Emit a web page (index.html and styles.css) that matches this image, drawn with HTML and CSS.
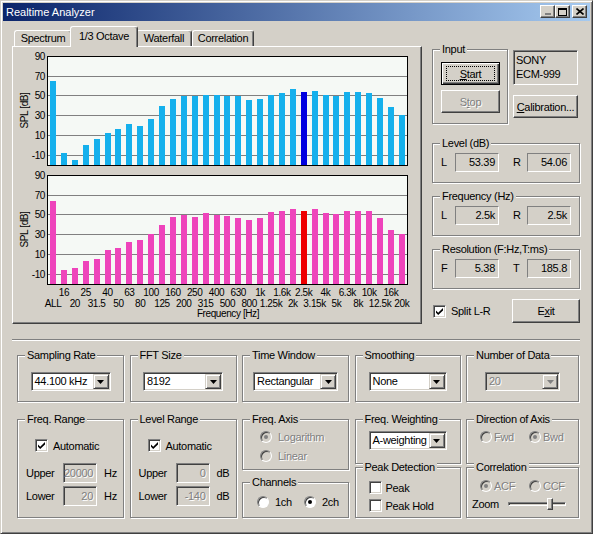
FILE: index.html
```html
<!DOCTYPE html>
<html lang="en">
<head>
  <meta charset="UTF-8">
  <title>Realtime Analyzer</title>
  <link rel="stylesheet" href="styles.css">
</head>
<body>
  <div class="window">
    <div class="titlebar">
      <span class="title">Realtime Analyzer</span>
      <div class="caption-buttons">
        <span class="cap-btn cap-min"><svg width="6" height="2"><rect width="6" height="2" fill="#808080"/></svg></span>
        <span class="cap-btn"><svg width="9" height="8" viewBox="0 0 9 8"><path d="M0 0h9v8H0z M1 2v5h7V2z" fill-rule="evenodd"/></svg></span>
        <span class="cap-btn cap-close"><svg width="8" height="7" viewBox="0 0 8 7"><path d="M0.5 0.5l7 6M7.5 0.5l-7 6" stroke="#000" stroke-width="1.6"/></svg></span>
      </div>
    </div>

    <div class="client">
      <div class="main">
        <div class="tabs">
          <div class="tab-strip">
            <div class="tab tab-spectrum">Spectrum</div>
            <div class="tab tab-octave active">1/3 Octave</div>
            <div class="tab tab-waterfall">Waterfall</div>
            <div class="tab tab-correlation">Correlation</div>
          </div>
          <div class="pane">
            <svg id="chart" class="chart" width="408" height="276" viewBox="13 47 408 276"></svg>
          </div>
        </div>

        <div class="side">
          <div class="input-row">
            <div class="group input-group">
              <span class="group-title">Input</span>
              <div class="btn btn-default btn-input"><u>S</u>tart</div>
              <div class="btn btn-input disabled">S<u>t</u>op</div>
            </div>
            <div class="device-col">
              <div class="device">SONY<br>ECM-999</div>
              <div class="btn btn-cal"><u>C</u>alibration...</div>
            </div>
          </div>

          <div class="group meter">
            <span class="group-title">Level (dB)</span>
            <span class="ch">L</span><span class="readout">53.39</span>
            <span class="ch ch-r">R</span><span class="readout">54.06</span>
          </div>

          <div class="group meter">
            <span class="group-title">Frequency (Hz)</span>
            <span class="ch">L</span><span class="readout">2.5k</span>
            <span class="ch ch-r">R</span><span class="readout">2.5k</span>
          </div>

          <div class="group meter">
            <span class="group-title">Resolution (F:Hz,T:ms)</span>
            <span class="ch">F</span><span class="readout">5.38</span>
            <span class="ch ch-r">T</span><span class="readout">185.8</span>
          </div>

          <div class="side-foot">
            <label class="check-item split">
              <span class="check"><svg width="9" height="9" viewBox="0 0 9 9"><path d="M1 3.5l2.2 2.2L8 1v2.4L3.2 8 1 5.8z"/></svg></span>
              Split L-R
            </label>
            <div class="btn btn-exit">E<u>x</u>it</div>
          </div>
        </div>
      </div>

      <div class="separator"></div>

      <div class="settings">
        <!-- row 1 -->
        <div class="group group-combo">
          <span class="group-title">Sampling Rate</span>
          <div class="combo combo-sampling">
            <span class="combo-text">44.100 kHz</span>
            <span class="combo-btn"><svg width="7" height="4" viewBox="0 0 7 4"><path d="M0 0h7L3.5 4z"/></svg></span>
          </div>
        </div>
        <div class="group group-combo">
          <span class="group-title">FFT Size</span>
          <div class="combo combo-fft">
            <span class="combo-text">8192</span>
            <span class="combo-btn"><svg width="7" height="4" viewBox="0 0 7 4"><path d="M0 0h7L3.5 4z"/></svg></span>
          </div>
        </div>
        <div class="group group-combo">
          <span class="group-title">Time Window</span>
          <div class="combo combo-window">
            <span class="combo-text">Rectangular</span>
            <span class="combo-btn"><svg width="7" height="4" viewBox="0 0 7 4"><path d="M0 0h7L3.5 4z"/></svg></span>
          </div>
        </div>
        <div class="group group-combo">
          <span class="group-title">Smoothing</span>
          <div class="combo combo-smoothing">
            <span class="combo-text">None</span>
            <span class="combo-btn"><svg width="7" height="4" viewBox="0 0 7 4"><path d="M0 0h7L3.5 4z"/></svg></span>
          </div>
        </div>
        <div class="group group-combo">
          <span class="group-title">Number of Data</span>
          <div class="combo combo-number disabled">
            <span class="combo-text">20</span>
            <span class="combo-btn"><svg width="7" height="4" viewBox="0 0 7 4"><path d="M0 0h7L3.5 4z" fill="#808080"/></svg></span>
          </div>
        </div>

        <!-- row 2 -->
        <div class="group range">
          <span class="group-title">Freq. Range</span>
          <label class="check-item auto">
            <span class="check"><svg width="9" height="9" viewBox="0 0 9 9"><path d="M1 3.5l2.2 2.2L8 1v2.4L3.2 8 1 5.8z"/></svg></span>
            Automatic
          </label>
          <div class="field field-first"><span class="field-label">Upper</span><span class="edit">20000</span><span class="unit">Hz</span></div>
          <div class="field"><span class="field-label">Lower</span><span class="edit">20</span><span class="unit">Hz</span></div>
        </div>

        <div class="group range">
          <span class="group-title">Level Range</span>
          <label class="check-item auto">
            <span class="check"><svg width="9" height="9" viewBox="0 0 9 9"><path d="M1 3.5l2.2 2.2L8 1v2.4L3.2 8 1 5.8z"/></svg></span>
            Automatic
          </label>
          <div class="field field-first"><span class="field-label">Upper</span><span class="edit">0</span><span class="unit">dB</span></div>
          <div class="field"><span class="field-label">Lower</span><span class="edit">-140</span><span class="unit">dB</span></div>
        </div>

        <div class="stack">
          <div class="group axis">
            <span class="group-title">Freq. Axis</span>
            <div class="radio-item disabled"><span class="radio on"></span>Logarithm</div>
            <div class="radio-item disabled"><span class="radio"></span>Linear</div>
          </div>
          <div class="group channels">
            <span class="group-title">Channels</span>
            <div class="radio-item ch-1"><span class="radio"></span>1ch</div>
            <div class="radio-item"><span class="radio on"></span>2ch</div>
          </div>
        </div>

        <div class="stack">
          <div class="group weighting">
            <span class="group-title">Freq. Weighting</span>
            <div class="combo combo-weighting">
              <span class="combo-text">A-weighting</span>
              <span class="combo-btn"><svg width="7" height="4" viewBox="0 0 7 4"><path d="M0 0h7L3.5 4z"/></svg></span>
            </div>
          </div>
          <div class="group peak">
            <span class="group-title">Peak Detection</span>
            <label class="check-item"><span class="check"></span>Peak</label>
            <label class="check-item"><span class="check"></span>Peak Hold</label>
          </div>
        </div>

        <div class="stack">
          <div class="group direction">
            <span class="group-title">Direction of Axis</span>
            <div class="radio-row">
              <div class="radio-item compact disabled opt-first"><span class="radio"></span>Fwd</div>
              <div class="radio-item compact disabled"><span class="radio on"></span>Bwd</div>
            </div>
          </div>
          <div class="group correlation">
            <span class="group-title">Correlation</span>
            <div class="radio-row">
              <div class="radio-item compact disabled opt-first"><span class="radio on"></span>ACF</div>
              <div class="radio-item compact disabled"><span class="radio"></span>CCF</div>
            </div>
            <div class="zoom-row">
              <span>Zoom</span>
              <div class="slider"><span class="slider-track"></span><span class="slider-thumb"></span></div>
            </div>
          </div>
        </div>
      </div>
    </div>
  </div>

  <script>
    const NS = "http://www.w3.org/2000/svg";
    const chart = document.getElementById("chart");
    const bands = ["ALL", "16", "20", "25", "31.5", "40", "50", "63", "80", "100", "125", "160",
      "200", "250", "315", "400", "500", "630", "800", "1k", "1.25k", "1.6k", "2k", "2.5k",
      "3.15k", "4k", "5k", "6.3k", "8k", "10k", "12.5k", "16k", "20k"];
    const upper = [66, -7.5, -15, 0.7, 6.5, 12.6, 16.7, 21.8, 20, 27.2, 40.4, 47.5, 50, 50, 51.3,
      51.3, 50, 50, 46.2, 47.5, 51.3, 53.3, 57.4, 54.4, 55.4, 51.3, 50, 54.4, 54.4, 53.3, 48.6, 39.4, 30.9];
    const lower = [65, -5.5, -3.5, 3.6, 5.3, 14.5, 16.5, 22.9, 24.6, 30.7, 40.2, 48, 50, 48, 52,
      50, 49, 47, 45, 47, 53, 54, 57, 54, 57, 52, 51, 54, 54, 54, 47, 35, 30.7];
    const peak = 23;

    function add(tag, attrs, text) {
      const node = document.createElementNS(NS, tag);
      for (const k in attrs) node.setAttribute(k, attrs[k]);
      if (text) node.textContent = text;
      chart.appendChild(node);
      return node;
    }

    // one plot: frame, grid, dB labels, bars
    function drawPlot(top, values, color, peakColor) {
      const bottom = top + 109;
      add("rect", { x: 47.5, y: top, width: 360, height: 109, fill: "#f5f9f5", stroke: "#000" });
      for (let k = 0; k <= 5; k++) {
        const y = Math.round(top + k * 19.7 - 0.5) + 0.5;
        if (k > 0) add("line", { x1: 48, x2: 407, y1: y, y2: y, stroke: "#808080" });
        add("text", { x: 45, y: y + 3.5, "text-anchor": "end" }, String(90 - k * 20));
      }
      values.forEach((v, i) => {
        const y = Math.round(top + 0.5 + (90 - v) * 0.985);
        add("rect", {
          x: Math.round(50 + i * 10.9), y: y, width: 6, height: bottom - 0.5 - y,
          fill: i === peak ? peakColor : color, "shape-rendering": "crispEdges"
        });
      });
      add("text", { transform: "translate(28 " + (top + 54) + ") rotate(-90)", "text-anchor": "middle" }, "SPL [dB]");
    }

    drawPlot(56.5, upper, "#14b0ec", "#0000e0");
    drawPlot(175.5, lower, "#ee44bb", "#ee0000");

    bands.forEach((b, i) => {
      add("text", { x: 53 + i * 10.9, y: i % 2 ? 295.5 : 306.5, "text-anchor": "middle" }, b);
    });
    add("text", { x: 228, y: 316.5, "text-anchor": "middle" }, "Frequency  [Hz]");
  </script>
</body>
</html>
```

FILE: styles.css
```css
* {
  box-sizing: border-box;
}

body {
  margin: 0;
  background-color: #d4d0c8;
  font-family: "Liberation Sans", Arial, sans-serif;
  font-size: 11px;
  letter-spacing: -0.3px;
  color: #000;
}

.window {
  width: 593px;
  height: 534px;
  padding: 2px;
  border: 1px solid;
  border-color: #d4d0c8 #404040 #404040 #d4d0c8;
  box-shadow: inset 1px 1px #fff, inset -1px -1px #808080;
  overflow: hidden;
}

/* title bar */
.titlebar {
  height: 18px;
  display: flex;
  align-items: center;
  padding: 0 3px;
  background: linear-gradient(to right, #0a246a, #a6caf0);
  color: #fff;
  letter-spacing: 0;
}

.caption-buttons {
  margin-left: auto;
  display: flex;
  align-self: flex-start;
  margin-top: 2px;
}

.cap-btn {
  width: 15px;
  height: 13px;
  display: flex;
  align-items: center;
  justify-content: center;
  background-color: #d4d0c8;
  border: 1px solid;
  border-color: #fff #404040 #404040 #fff;
  box-shadow: inset -1px -1px #808080;
}

.cap-min {
  align-items: flex-end;
  padding-bottom: 2px;
}

.cap-close {
  margin-left: 2px;
}

.client {
  padding: 5px 0 0 9px;
}

.main {
  display: flex;
  gap: 10px;
  height: 298px;
}

/* tab control */
.tabs {
  width: 410px;
}

.tab-strip {
  display: flex;
  align-items: flex-end;
  height: 20px;
  padding-left: 2px;
}

.tab {
  height: 16px;
  border: 1px solid;
  border-bottom: none;
  border-color: #fff #404040 #404040 #fff;
  border-radius: 3px 3px 0 0;
  box-shadow: inset -1px 0 #808080;
  text-align: center;
  line-height: 15px;
  white-space: nowrap;
}

.tab.active {
  height: 21px;
  margin: 0 -2px -1px;
  position: relative;
  z-index: 1;
  background-color: #d4d0c8;
  line-height: 18px;
}

.tab-spectrum { width: 58px; }
.tab-octave { width: 68px; }
.tab-waterfall { width: 56px; }
.tab-correlation { width: 62px; }

.pane {
  height: 278px;
  border: 1px solid;
  border-color: #fff #404040 #404040 #fff;
  box-shadow: inset -1px -1px #808080;
}

.chart {
  display: block;
}

.chart text {
  font-family: "Liberation Sans", Arial, sans-serif;
  font-size: 10px;
  letter-spacing: -0.4px;
  fill: #000;
}

/* group boxes */
.group {
  position: relative;
  border: 1px solid #808080;
  box-shadow: inset 1px 1px #fff, 1px 1px #fff;
}

.group-title {
  position: absolute;
  top: -7px;
  left: 7px;
  padding: 0 2px;
  line-height: 13px;
  background-color: #d4d0c8;
  white-space: nowrap;
}

/* buttons */
.btn {
  display: flex;
  align-items: center;
  justify-content: center;
  background-color: #d4d0c8;
  border: 1px solid;
  border-color: #fff #404040 #404040 #fff;
  box-shadow: inset -1px -1px #808080;
  white-space: nowrap;
}

.btn-default {
  position: relative;
  border-color: #000;
  box-shadow: inset 1px 1px #fff, inset -1px -1px #404040, inset -2px -2px #808080;
}

.btn-default::after {
  content: "";
  position: absolute;
  inset: 3px 4px;
  border: 1px dotted #000;
}

.disabled,
.btn.disabled {
  color: #808080;
  text-shadow: 1px 1px #fff;
}

/* right column */
.side {
  width: 148px;
  display: flex;
  flex-direction: column;
}

.input-row {
  display: flex;
  margin-top: 23px;
}

.input-group {
  width: 76px;
  height: 75px;
  padding: 12px 0 0 8px;
  display: flex;
  flex-direction: column;
  gap: 5px;
}

.btn-input {
  width: 59px;
  height: 23px;
}

.device-col {
  width: 65px;
  margin-left: 5px;
}

.device {
  height: 35px;
  margin-top: 1px;
  padding: 2px 0 0 2px;
  line-height: 14px;
  border: 1px solid;
  border-color: #808080 #fff #fff #808080;
  box-shadow: inset 1px 1px #404040;
}

.btn-cal {
  height: 23px;
  margin-top: 10px;
}

.meter {
  height: 40px;
  margin-top: 13px;
  padding: 9px 0 0 8px;
  display: flex;
  align-items: flex-start;
}

.input-row + .meter {
  margin-top: 19px;
}

.ch {
  width: 14px;
  line-height: 19px;
}

.ch-r {
  margin-left: 14px;
}

.readout {
  width: 44px;
  height: 19px;
  padding-right: 3px;
  border: 1px solid;
  border-color: #808080 #fff #fff #808080;
  text-align: right;
  line-height: 17px;
}

.side-foot {
  display: flex;
  align-items: center;
  height: 24px;
  margin-top: 10px;
}

.split {
  margin-left: 1px;
}

.btn-exit {
  width: 68px;
  height: 24px;
  margin-left: auto;
}

/* check boxes and radios */
.check-item {
  display: flex;
  align-items: center;
  gap: 5px;
  height: 13px;
  white-space: nowrap;
}

.check {
  width: 13px;
  height: 13px;
  display: flex;
  align-items: center;
  justify-content: center;
  background-color: #fff;
  border: 1px solid;
  border-color: #808080 #fff #fff #808080;
  box-shadow: inset 1px 1px #404040, inset -1px -1px #d4d0c8;
}

.radio-item {
  display: flex;
  align-items: center;
  gap: 6px;
  height: 12px;
  white-space: nowrap;
}

.radio-item.compact {
  gap: 2px;
}

.radio {
  width: 12px;
  height: 12px;
  display: flex;
  align-items: center;
  justify-content: center;
  border-radius: 50%;
  background-color: #fff;
  border: 1px solid;
  border-color: #808080 #fff #fff #808080;
  box-shadow: inset 1px 1px #404040;
  text-shadow: none;
}

.radio.on::after {
  content: "";
  width: 4px;
  height: 4px;
  border-radius: 50%;
  background-color: #000;
}

.disabled .radio {
  background-color: #d4d0c8;
}

.disabled .radio.on::after {
  background-color: #808080;
}

/* separator and settings */
.separator {
  width: 568px;
  height: 2px;
  margin-top: 15px;
  border-top: 1px solid #808080;
  border-bottom: 1px solid #fff;
}

.settings {
  display: grid;
  grid-template-columns: 107px 107px 107px 106px 113px;
  grid-template-rows: 47px 99px;
  column-gap: 5.5px;
  row-gap: 17px;
  margin: 14px 0 0 5px;
}

.group-combo {
  display: flex;
  justify-content: center;
  align-items: flex-start;
  padding-top: 16px;
}

.combo {
  display: flex;
  height: 19px;
  padding: 1px;
  background-color: #fff;
  border: 1px solid;
  border-color: #808080 #fff #fff #808080;
  box-shadow: inset 1px 1px #404040, inset -1px -1px #d4d0c8;
}

.combo.disabled {
  background-color: #d4d0c8;
}

.combo-text {
  flex: 1;
  padding-left: 2px;
  line-height: 15px;
  white-space: nowrap;
  overflow: hidden;
}

.combo-btn {
  width: 16px;
  height: 15px;
  display: flex;
  align-items: center;
  justify-content: center;
  background-color: #d4d0c8;
  border: 1px solid;
  border-color: #d4d0c8 #404040 #404040 #d4d0c8;
  box-shadow: inset 1px 1px #fff, inset -1px -1px #808080;
}

.combo-sampling { width: 80px; }
.combo-fft { width: 80px; }
.combo-window { width: 85px; }
.combo-smoothing { width: 78px; }
.combo-number { width: 75px; }
.combo-weighting { width: 78px; }

.range {
  padding: 19px 0 0 8px;
}

.auto {
  margin-left: 9px;
}

.field {
  display: flex;
  align-items: center;
  height: 20px;
  margin-top: 3px;
}

.field-first {
  margin-top: 11px;
}

.field-label {
  width: 37px;
}

.edit {
  width: 34px;
  height: 20px;
  padding-right: 3px;
  border: 1px solid;
  border-color: #808080 #fff #fff #808080;
  box-shadow: inset 1px 1px #404040, inset -1px -1px #d4d0c8;
  text-align: right;
  line-height: 18px;
  color: #808080;
  text-shadow: 1px 1px #fff;
}

.unit {
  margin-left: 7px;
}

.stack {
  display: flex;
  flex-direction: column;
  justify-content: space-between;
}

.axis {
  height: 51px;
  padding: 11px 0 0 17px;
  display: flex;
  flex-direction: column;
  gap: 7px;
}

.channels {
  height: 36px;
  padding: 13px 0 0 14px;
  display: flex;
}

.ch-1 {
  width: 47px;
}

.weighting {
  height: 45px;
  padding-top: 11px;
  display: flex;
  justify-content: center;
  align-items: flex-start;
}

.peak {
  height: 51px;
  padding: 13px 0 0 13px;
  display: flex;
  flex-direction: column;
  gap: 5px;
}

.peak .check-item {
  gap: 4px;
}

.direction {
  height: 45px;
  padding: 11px 0 0 13px;
}

.radio-row {
  display: flex;
}

.opt-first {
  width: 49px;
}

.correlation {
  height: 51px;
  padding: 12px 0 0 5px;
}

.correlation .radio-row {
  margin-left: 8px;
}

.zoom-row {
  display: flex;
  align-items: center;
  height: 14px;
  margin-top: 5px;
}

.slider {
  position: relative;
  width: 58px;
  height: 14px;
  margin-left: 9px;
}

.slider-track {
  position: absolute;
  left: 0;
  right: 0;
  top: 5px;
  height: 4px;
  border: 1px solid;
  border-color: #808080 #fff #fff #808080;
  box-shadow: inset 1px 1px #404040;
}

.slider-thumb {
  position: absolute;
  left: 39px;
  top: 1px;
  width: 6px;
  height: 12px;
  background-color: #d4d0c8;
  border: 1px solid;
  border-color: #fff #404040 #404040 #fff;
  box-shadow: inset -1px -1px #808080;
}
```
